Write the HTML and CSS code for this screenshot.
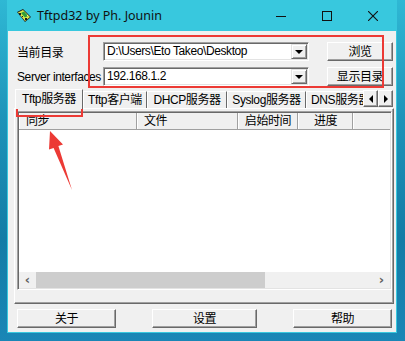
FILE: index.html
```html
<!DOCTYPE html>
<html>
  <head>
    <meta charset="utf-8" />
    <title>Tftpd32 by Ph. Jounin</title>
    <link rel="stylesheet" href="styles.css">
  </head>

  <body>
    <div class="desk">
      <div class="win">
        <div class="titlebar">
          <svg class="app-icon" viewBox="0 0 16 16" xmlns="http://www.w3.org/2000/svg">
            <polygon points="1,4 7,1 15,9 9,14" fill="#1d1d1d" />
            <polygon points="2,4.5 7,2 14,9 9,13" fill="#d8e84a" />
            <polygon points="5,5 8,3.5 12,8 9,9.5" fill="#2f9e3a" />
            <rect x="3" y="5" width="2" height="2" fill="#1d1d1d" />
            <rect x="9" y="10" width="2" height="2" fill="#1d1d1d" />
            <rect x="6" y="8" width="1" height="1" fill="#1d1d1d" />
            <rect x="11" y="7" width="1" height="1" fill="#f4f4a0" />
          </svg>
          <span class="title">Tftpd32 by Ph. Jounin</span>
          <div class="controls">
            <div class="ctl">
              <svg width="10" height="10" viewBox="0 0 10 10"><line x1="0" y1="5.5" x2="10" y2="5.5" stroke="#111" stroke-width="1" /></svg>
            </div>
            <div class="ctl">
              <svg width="10" height="10" viewBox="0 0 10 10"><rect x="0.5" y="0.5" width="9" height="9" fill="none" stroke="#111" stroke-width="1" /></svg>
            </div>
            <div class="ctl">
              <svg width="10" height="10" viewBox="0 0 10 10"><path d="M0 0 L10 10 M10 0 L0 10" stroke="#111" stroke-width="1.1" /></svg>
            </div>
          </div>
        </div>

        <div class="client">
          <div class="field">
            <span class="label">当前目录</span>
            <div class="combo">
              <span class="combo-text">D:\Users\Eto Takeo\Desktop</span>
              <span class="drop"><i class="tri-down"></i></span>
            </div>
            <button class="btn side">浏览</button>
          </div>
          <div class="field">
            <span class="label">Server interfaces</span>
            <div class="combo">
              <span class="combo-text">192.168.1.2</span>
              <span class="drop"><i class="tri-down"></i></span>
            </div>
            <button class="btn side">显示目录</button>
          </div>

          <div class="tabs">
            <div class="tab active" style="width: 68px">Tftp服务器</div>
            <div class="tab" style="width: 64px">Tftp客户端</div>
            <div class="tab" style="width: 80px">DHCP服务器</div>
            <div class="tab" style="width: 79px">Syslog服务器</div>
            <div class="tab clipped">DNS服务器</div>
            <div class="spin">
              <span class="spin-btn"><i class="tri-left"></i></span>
              <span class="spin-btn"><i class="tri-right"></i></span>
            </div>
          </div>

          <div class="panel">
            <div class="list">
              <div class="head">
                <span class="col" style="width: 118px">同步</span>
                <span class="col" style="width: 101px">文件</span>
                <span class="col center" style="width: 60px">启始时间</span>
                <span class="col center" style="width: 55px">进度</span>
                <span class="col rest"></span>
              </div>
              <div class="rows"></div>
              <div class="hscroll">
                <span class="arrow">&lsaquo;</span>
                <span class="thumb"></span>
                <span class="track"></span>
                <span class="arrow">&rsaquo;</span>
              </div>
            </div>
          </div>

          <div class="bottom">
            <button class="btn b-about">关于</button>
            <button class="btn b-setup">设置</button>
            <button class="btn b-help">帮助</button>
          </div>
        </div>
      </div>

      <!-- annotations -->
      <div class="mark mark-fields"></div>
      <div class="mark mark-tab"></div>
      <svg class="pointer" viewBox="0 0 405 341" xmlns="http://www.w3.org/2000/svg">
        <polygon points="50,131 63,144.4 58.4,146.1 72,190 53.6,147.9 49,149.6" fill="#ec3a35" />
      </svg>
    </div>
  </body>
</html>
```

FILE: styles.css
```css
* {
  margin: 0;
  padding: 0;
  box-sizing: border-box;
}

body {
  width: 405px;
  height: 341px;
  overflow: hidden;
  background: linear-gradient(180deg, #2fb8d4 0%, #1d93b9 35%, #137ca6 70%, #1a86b6 100%);
  font-family: "Liberation Sans", "Noto Sans CJK SC", sans-serif;
  font-size: 12px;
  letter-spacing: -0.4px;
  color: #000;
}

.desk {
  position: relative;
  height: 341px;
}

.win {
  margin-left: 7px;
  width: 390px;
  background: #38c8de;
  padding: 0 1px 1px;
}

/* title bar */
.titlebar {
  height: 31px;
  display: flex;
  align-items: center;
}

.app-icon {
  margin-left: 8px;
  width: 16px;
  height: 16px;
}

.title {
  margin-left: 5px;
  font-family: "Noto Sans", sans-serif;
  font-size: 12.5px;
  letter-spacing: 0;
  color: #111;
}

.controls {
  margin-left: auto;
  display: flex;
}

.ctl {
  width: 46px;
  height: 31px;
  display: flex;
  align-items: center;
  justify-content: center;
}

/* dialog body */
.client {
  background: #f0f0f0;
  height: 301px;
  padding-top: 11px;
}

.field {
  display: flex;
  align-items: center;
  height: 19px;
  padding-left: 9px;
}

.field + .field {
  margin-top: 6px;
}

.label {
  width: 86px;
  white-space: nowrap;
}

.combo {
  width: 206px;
  height: 19px;
  display: flex;
  background: #fff;
  border: 1px solid;
  border-color: #a0a0a0 #fff #fff #a0a0a0;
  box-shadow: inset 1px 1px #696969, inset -1px -1px #e3e3e3;
  padding: 1px;
}

.combo-text {
  flex: 1;
  padding-left: 2px;
  line-height: 15px;
  white-space: nowrap;
  overflow: hidden;
}

.drop {
  width: 16px;
  height: 15px;
  background: #f0f0f0;
  border: 1px solid;
  border-color: #e3e3e3 #696969 #696969 #e3e3e3;
  box-shadow: inset 1px 1px #fff, inset -1px -1px #a0a0a0;
  display: flex;
  align-items: center;
  justify-content: center;
}

.tri-down {
  width: 0;
  height: 0;
  border-left: 4px solid transparent;
  border-right: 4px solid transparent;
  border-top: 4px solid #000;
}

.tri-left,
.tri-right {
  width: 0;
  height: 0;
  border-top: 4px solid transparent;
  border-bottom: 4px solid transparent;
}

.tri-left {
  border-right: 4px solid #000;
}

.tri-right {
  border-left: 4px solid #000;
}

.btn {
  font: inherit;
  letter-spacing: inherit;
  color: #000;
  height: 19px;
  background: #f0f0f0;
  border: 1px solid;
  border-color: #fff #696969 #696969 #fff;
  box-shadow: inset -1px -1px #a0a0a0;
  line-height: 16px;
}

.side {
  margin-left: 18px;
  width: 66px;
}

/* tab strip */
.tabs {
  display: flex;
  align-items: flex-end;
  height: 19px;
  margin-top: 3px;
  padding-left: 7px;
  position: relative;
  z-index: 1;
}

.tab {
  height: 17px;
  border-top: 1px solid #fff;
  border-left: 1px solid #fff;
  border-right: 1px solid #696969;
  text-align: center;
  line-height: 16px;
  white-space: nowrap;
}

.tab.active {
  height: 20px;
  margin-bottom: -1px;
  background: #f0f0f0;
  line-height: 18px;
}

.tab.clipped {
  width: 57px;
  border-right: 0;
  overflow: hidden;
  text-align: left;
  padding-left: 4px;
}

.spin {
  display: flex;
  align-self: flex-start;
  margin-top: 1px;
}

.spin-btn {
  width: 15px;
  height: 17px;
  background: #f0f0f0;
  border: 1px solid;
  border-color: #fff #696969 #696969 #fff;
  box-shadow: inset -1px -1px #a0a0a0;
  display: flex;
  align-items: center;
  justify-content: center;
}

.panel {
  margin-left: 6px;
  width: 380px;
  height: 196px;
  border: 1px solid;
  border-color: #fff #696969 #696969 #fff;
  box-shadow: inset -1px -1px #a0a0a0;
  padding: 2px 0 0 2px;
}

.list {
  width: 375px;
  height: 179px;
  display: flex;
  flex-direction: column;
  background: #fff;
  border: 1px solid;
  border-color: #a0a0a0 #fff #fff #a0a0a0;
  box-shadow: inset 1px 1px #696969, inset -1px -1px #e3e3e3;
  padding: 1px;
}

.head {
  display: flex;
  height: 17px;
  background: #f0f0f0;
  border-bottom: 1px solid #a0a0a0;
}

.col {
  padding-left: 6px;
  line-height: 16px;
  border-left: 1px solid #fff;
  border-right: 1px solid #a0a0a0;
  white-space: nowrap;
}

.col.center {
  text-align: center;
  padding-left: 0;
}

.col.rest {
  flex: 1;
  border-right: 0;
}

.rows {
  flex: 1;
}

.hscroll {
  display: flex;
  height: 16px;
  background: #f0f0f0;
}

.arrow {
  width: 17px;
  text-align: center;
  font-family: "DejaVu Sans", sans-serif;
  font-weight: bold;
  font-size: 13px;
  line-height: 15px;
  color: #606060;
  letter-spacing: 0;
}

.thumb {
  width: 229px;
  margin: 0 0 0 0;
  background: #cdcdcd;
}

.track {
  flex: 1;
}

/* bottom buttons */
.bottom {
  display: flex;
  margin-top: 5px;
  padding-left: 9px;
}

.b-about {
  width: 99px;
}

.b-setup {
  width: 105px;
  margin-left: 36px;
}

.b-help {
  width: 99px;
  margin-left: 36px;
}

/* red annotations */
.mark {
  position: absolute;
  border: 2px solid #ec3a35;
}

.mark-fields {
  left: 88px;
  top: 35px;
  width: 296px;
  height: 53px;
}

.mark-tab {
  left: 16px;
  top: 89px;
  width: 67px;
  height: 28px;
}

.pointer {
  position: absolute;
  left: 0;
  top: 0;
  width: 405px;
  height: 341px;
}
```
